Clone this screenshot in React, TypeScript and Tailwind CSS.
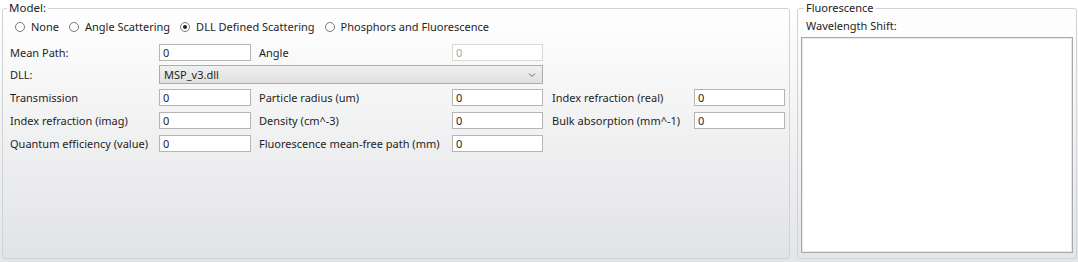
import React from "react";

const font = { fontFamily: '"Noto Sans", "Noto Sans CJK SC", sans-serif' };

function Radio({ label, checked }: { label: string; checked?: boolean }) {
  return (
    <span className="flex items-center whitespace-nowrap">
      <span className="w-[10px] h-[10px] rounded-full border border-[#7a7a7a] bg-white flex items-center justify-center mr-[6px] shrink-0">
        {checked && <span className="w-[4px] h-[4px] rounded-full bg-[#222]" />}
      </span>
      <span>{label}</span>
    </span>
  );
}

function Input({ value = "0", disabled, w }: { value?: string; disabled?: boolean; w: string }) {
  return (
    <div
      className={`${w} shrink-0 h-[17px] border bg-white flex items-center pl-[3px] leading-none ${
        disabled ? "border-[#d9d9d9] text-[#a8a8a8]" : "border-[#b5b5b5] text-[#1e1e1e]"
      }`}
    >
      {value}
    </div>
  );
}

function Label({ w, children }: { w: string; children: React.ReactNode }) {
  return <span className={`${w} shrink-0 whitespace-nowrap`}>{children}</span>;
}

export default function App() {
  return (
    <div
      className="w-[1078px] h-[262px] bg-gradient-to-b from-[#ffffff] to-[#e4e5e7] flex text-[11px] text-[#1e1e1e] leading-[16px]"
      style={font}
    >
      <fieldset className="ml-[2px] w-[788px] min-w-0 h-[259px] shrink-0 border border-[#cfd3d6] rounded-[3px] pl-[7px] pr-[2px] bg-gradient-to-b from-[#ffffff] to-[#e2e3e5]">
        <legend className="px-[2px] -ml-[3px] text-[#222] text-[11.5px]">Model:</legend>
        <div className="flex items-center gap-[10px] mt-[3px] ml-[5px] h-[16px]">
          <Radio label="None" />
          <Radio label="Angle Scattering" />
          <Radio label="DLL Defined Scattering" checked />
          <Radio label="Phosphors and Fluorescence" />
        </div>
        <div className="mt-[9px] flex flex-col">
          <div className="flex items-center h-[17px]">
            <Label w="w-[149px]">Mean Path:</Label>
            <Input w="w-[92px]" />
            <Label w="w-[201px] pl-[8px]">Angle</Label>
            <Input w="w-[91px]" disabled />
          </div>
          <div className="flex items-center h-[19px] mt-[4px]">
            <Label w="w-[149px]">DLL:</Label>
            <div className="w-[384px] shrink-0 h-[19px] border border-[#acacac] bg-gradient-to-b from-[#f0f0f0] to-[#e0e0e0] flex items-center justify-between pl-[4px] pr-[6px]">
              <span>MSP_v3.dll</span>
              <svg width="8" height="6" viewBox="0 0 8 6">
                <path d="M1 1.5 L4 4.5 L7 1.5" fill="none" stroke="#666" strokeWidth="1" />
              </svg>
            </div>
          </div>
          <div className="flex items-center h-[17px] mt-[5px]">
            <Label w="w-[149px]">Transmission</Label>
            <Input w="w-[92px]" />
            <Label w="w-[201px] pl-[8px]">Particle radius (um)</Label>
            <Input w="w-[91px]" />
            <Label w="w-[151px] pl-[9px]">Index refraction (real)</Label>
            <Input w="w-[91px]" />
          </div>
          <div className="flex items-center h-[17px] mt-[6px]">
            <Label w="w-[149px]">Index refraction (imag)</Label>
            <Input w="w-[92px]" />
            <Label w="w-[201px] pl-[8px]">Density (cm^-3)</Label>
            <Input w="w-[91px]" />
            <Label w="w-[151px] pl-[9px]">Bulk absorption (mm^-1)</Label>
            <Input w="w-[91px]" />
          </div>
          <div className="flex items-center h-[17px] mt-[6px]">
            <Label w="w-[149px]">Quantum efficiency (value)</Label>
            <Input w="w-[92px]" />
            <Label w="w-[201px] pl-[8px]">Fluorescence mean-free path (mm)</Label>
            <Input w="w-[91px]" />
          </div>
        </div>
      </fieldset>
      <fieldset className="ml-[7px] w-[280px] min-w-0 h-[259px] shrink-0 border border-[#cfd3d6] rounded-[3px] px-[3px] bg-gradient-to-b from-[#ffffff] to-[#e4e5e7]">
        <legend className="ml-[3px] px-[2px] text-[#222] text-[11px]">Fluorescence</legend>
        <div className="pl-[5px] mt-[2px] h-[16px]">Wavelength Shift:</div>
        <div className="mt-[3px] w-[272px] h-[216px] border border-[#a9a9a9] bg-white shadow-[inset_0_0_0_1px_#e8e8e8]" />
      </fieldset>
    </div>
  );
}
